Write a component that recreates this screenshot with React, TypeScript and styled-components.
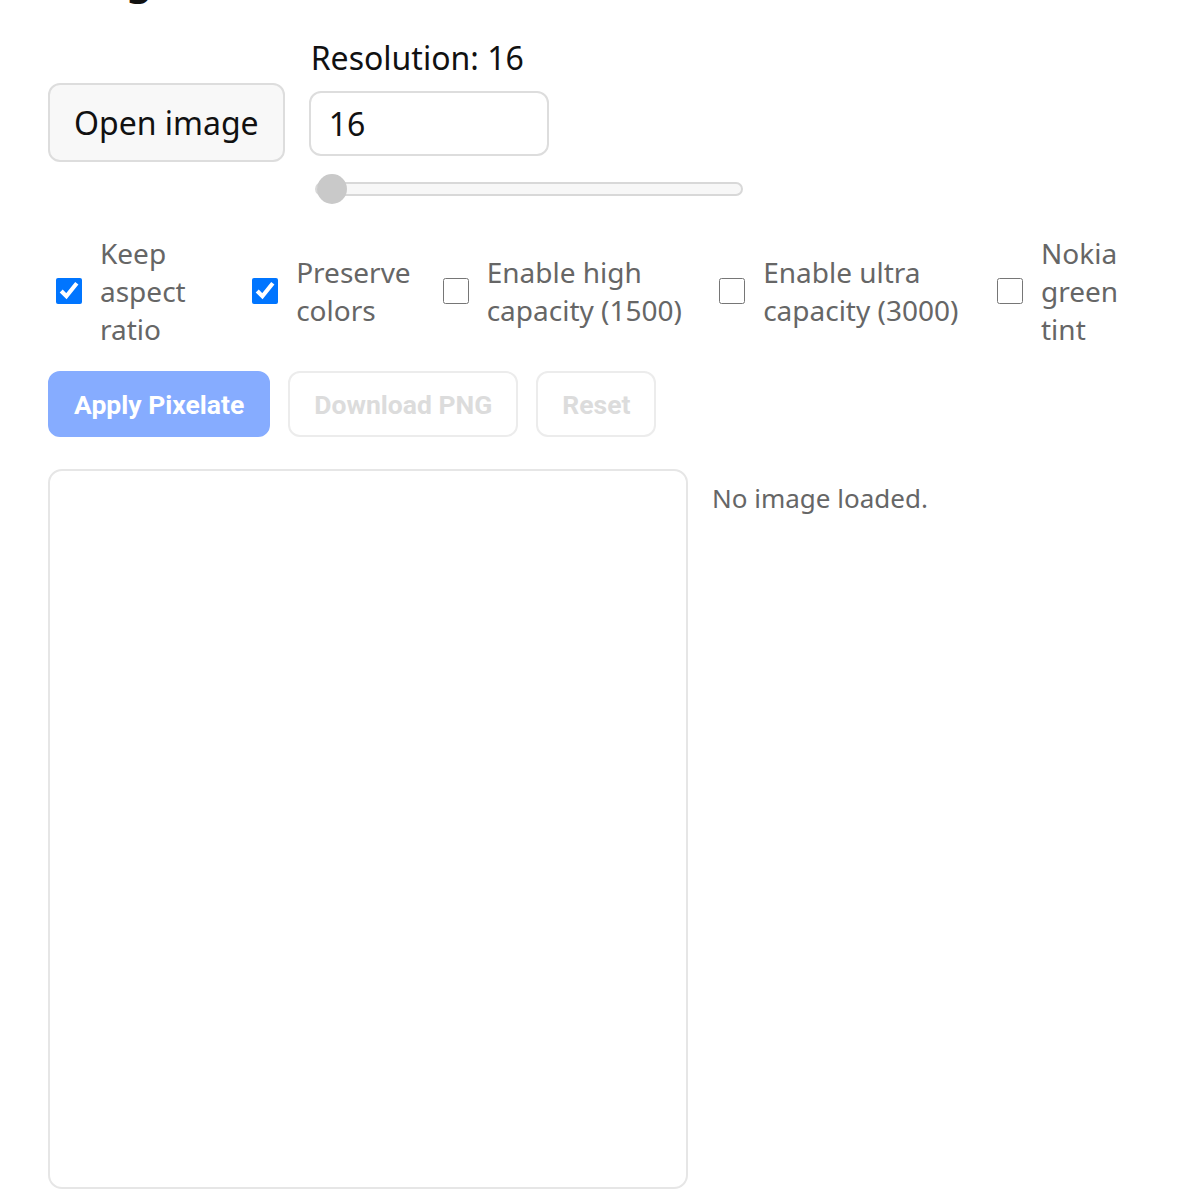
import React, { useState } from 'react'
import styled, { createGlobalStyle } from 'styled-components'

const GlobalStyle = createGlobalStyle`
    body {
        margin: 0;
        background: #ffffff;
        font-family: 'Noto Sans', 'Open Sans', sans-serif;
        color: #111111;
    }
`

type Option = {
    key: string
    label: string
}

const options: Option[] = [
    { key: 'aspect', label: 'Keep aspect ratio' },
    { key: 'colors', label: 'Preserve colors' },
    { key: 'high', label: 'Enable high capacity (1500)' },
    { key: 'ultra', label: 'Enable ultra capacity (3000)' },
    { key: 'nokia', label: 'Nokia green tint' },
]

function App(): JSX.Element {
    const [resolution, setResolution] = useState(16)
    const [checked, setChecked] = useState<Record<string, boolean>>({
        aspect: true,
        colors: true,
        high: false,
        ultra: false,
        nokia: false,
    })

    return (
        <Page>
            <GlobalStyle />
            <Title>Image Pixelator</Title>

            <ControlsRow>
                <OpenButton type="button">Open image</OpenButton>
                <ResolutionColumn>
                    <ResolutionLabel>Resolution: {resolution}</ResolutionLabel>
                    <NumberInput
                        type="number"
                        value={resolution}
                        onChange={(e) => setResolution(Number(e.target.value))}
                    />
                    <SliderWrap>
                        <Slider
                            type="range"
                            min={16}
                            max={512}
                            value={resolution}
                            onChange={(e) => setResolution(Number(e.target.value))}
                        />
                    </SliderWrap>
                </ResolutionColumn>
            </ControlsRow>

            <OptionsRow>
                {options.map((o) => (
                    <OptionLabel key={o.key}>
                        <Check
                            type="checkbox"
                            checked={checked[o.key]}
                            onChange={() =>
                                setChecked({ ...checked, [o.key]: !checked[o.key] })
                            }
                        />
                        <span>{o.label}</span>
                    </OptionLabel>
                ))}
            </OptionsRow>

            <ActionsRow>
                <ActionButton $primary>Apply Pixelate</ActionButton>
                <ActionButton disabled>Download PNG</ActionButton>
                <ActionButton disabled>Reset</ActionButton>
            </ActionsRow>

            <PreviewRow>
                <PreviewFrame />
                <EmptyNote>No image loaded.</EmptyNote>
            </PreviewRow>
        </Page>
    )
}

export default App

const Page = styled.div`
    padding: 0 48px;
`

const Title = styled.h1`
    margin: -44px 0 0;
    font-size: 40px;
    line-height: 48px;
    font-weight: 700;
`

const ControlsRow = styled.div`
    display: flex;
    align-items: center;
    gap: 24px;
    margin-top: 30px;
`

const OpenButton = styled.button`
    font-family: inherit;
    font-size: 32px;
    color: #111;
    background: #f8f8f8;
    border: 2px solid #dddddd;
    border-radius: 12px;
    padding: 16px 24px;
    cursor: pointer;
`

const ResolutionColumn = styled.div`
    display: flex;
    flex-direction: column;
    align-items: flex-start;
`

const ResolutionLabel = styled.label`
    font-size: 32px;
    margin-top: 2px;
    margin-left: 2px;
    margin-bottom: 12px;
`

const NumberInput = styled.input`
    box-sizing: border-box;
    width: 240px;
    height: 65px;
    padding: 0 18px;
    font-family: inherit;
    font-size: 32px;
    color: #111;
    border: 2px solid #dddddd;
    border-radius: 12px;
    outline: none;
    -moz-appearance: textfield;

    &::-webkit-inner-spin-button,
    &::-webkit-outer-spin-button {
        -webkit-appearance: none;
        margin: 0;
    }
`

const SliderWrap = styled.div`
    height: 36px;
    margin-top: 18px;
    display: flex;
    align-items: flex-start;
`

const Slider = styled.input`
    -webkit-appearance: none;
    appearance: none;
    width: 428px;
    height: 30px;
    margin: 0 0 0 6px;
    background: transparent;

    &::-webkit-slider-runnable-track {
        height: 14px;
        box-sizing: border-box;
        background: #f7f7f7;
        border: 2px solid #d8d8d8;
        border-radius: 7px;
    }

    &::-webkit-slider-thumb {
        -webkit-appearance: none;
        width: 30px;
        height: 30px;
        margin-top: -10px;
        border-radius: 50%;
        background: #c9c9c9;
        border: none;
    }
`

const OptionsRow = styled.div`
    display: flex;
    gap: 24px;
    margin-top: 24px;
`

const OptionLabel = styled.label`
    display: flex;
    align-items: center;
    gap: 12px;
    font-size: 28px;
    color: #666666;
`

const Check = styled.input`
    flex-shrink: 0;
    width: 26px;
    height: 26px;
    margin: 6px 6px 6px 8px;
`

const ActionsRow = styled.div`
    display: flex;
    gap: 18px;
    margin-top: 23px;
`

const ActionButton = styled.button<{ $primary?: boolean }>`
    font-family: Roboto, 'Liberation Sans', sans-serif;
    font-weight: 700;
    font-size: 26.5px;
    height: 66px;
    padding: 0 24px;
    border-radius: 12px;
    border: 2px solid ${(p) => (p.$primary ? '#86acff' : '#ececec')};
    background: ${(p) => (p.$primary ? '#86acff' : '#ffffff')};
    color: ${(p) => (p.$primary ? '#ffffff' : '#dcdcdc')};
`

const PreviewRow = styled.div`
    display: flex;
    align-items: flex-start;
    gap: 24px;
    margin-top: 32px;
`

const PreviewFrame = styled.div`
    box-sizing: border-box;
    width: 640px;
    height: 720px;
    border: 2px solid #e6e6e6;
    border-radius: 14px;
    background: #ffffff;
    flex-shrink: 0;
`

const EmptyNote = styled.p`
    margin: 11px 0 0;
    font-size: 26px;
    color: #666666;
`
